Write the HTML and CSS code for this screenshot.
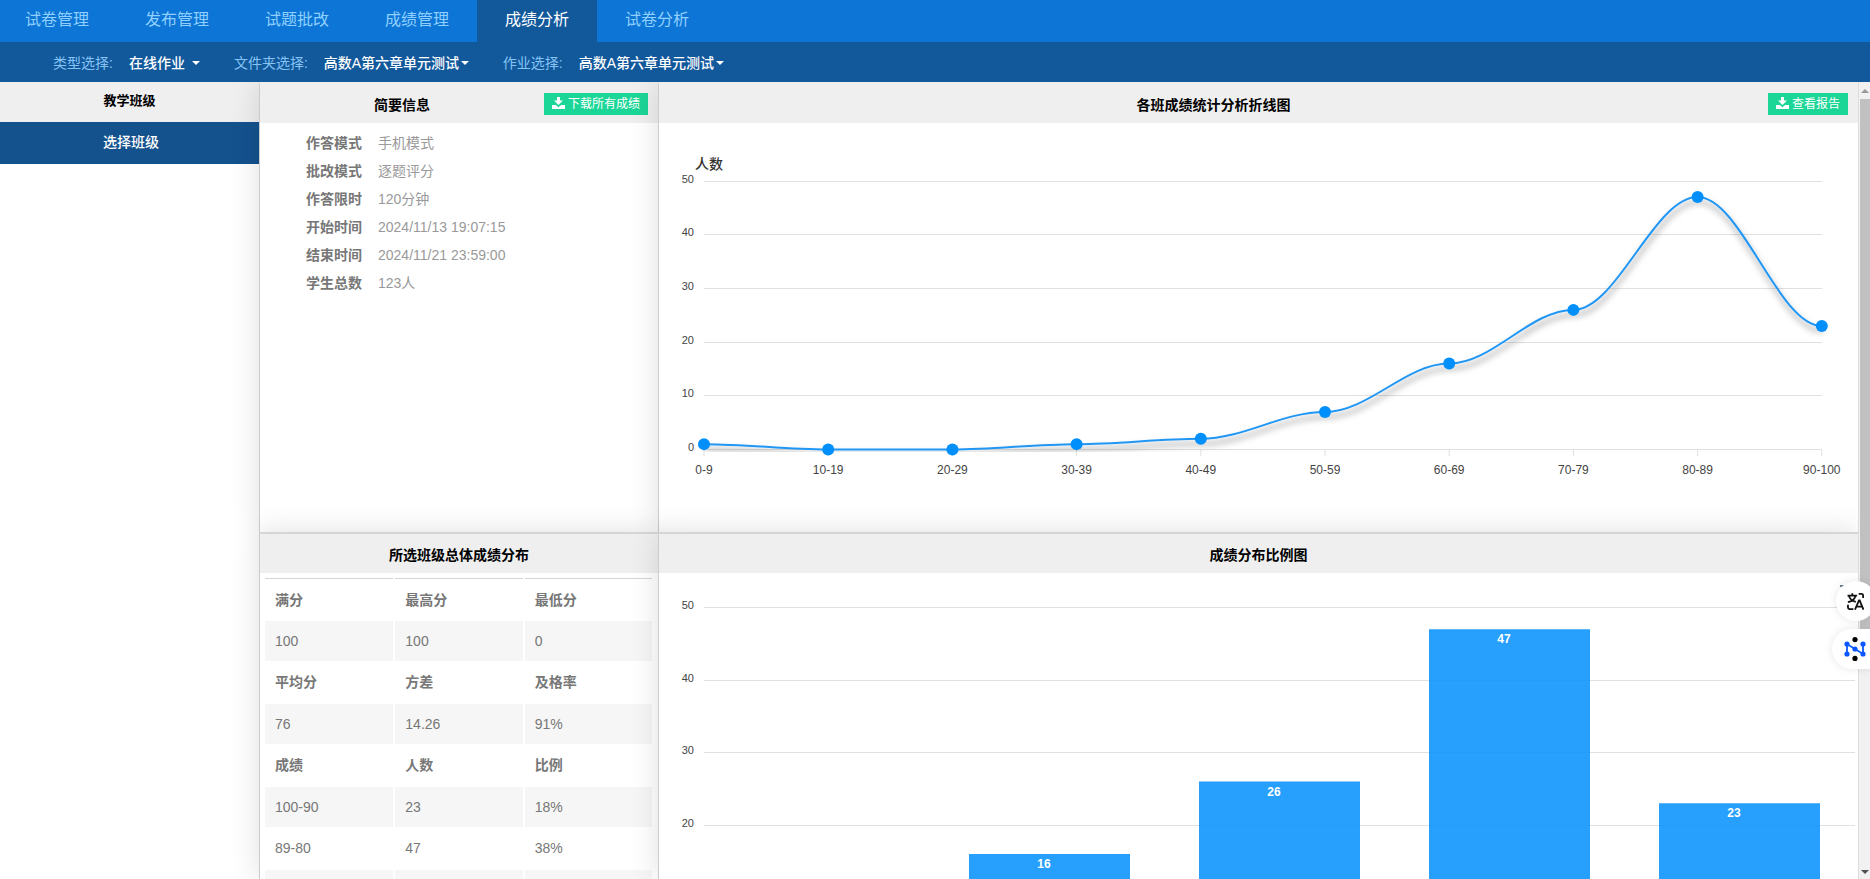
FILE: index.html
```html
<!DOCTYPE html>
<html lang="zh-CN">
<head>
<meta charset="utf-8">
<title>成绩分析</title>
<link rel="stylesheet" href="styles.css">
</head>
<body>
<div class="app">
  <header class="top">
    <nav class="tabs">
      <a href="#">试卷管理</a>
      <a href="#">发布管理</a>
      <a href="#">试题批改</a>
      <a href="#">成绩管理</a>
      <a href="#" class="active">成绩分析</a>
      <a href="#">试卷分析</a>
    </nav>
    <form class="filters">
      <div class="filter">
        <label for="type">类型选择:</label>
        <span class="pick spaced"><select id="type"><option>在线作业</option></select></span>
      </div>
      <div class="filter">
        <label for="folder">文件夹选择:</label>
        <span class="pick"><select id="folder"><option>高数A第六章单元测试</option></select></span>
      </div>
      <div class="filter">
        <label for="work">作业选择:</label>
        <span class="pick"><select id="work"><option>高数A第六章单元测试</option></select></span>
      </div>
    </form>
  </header>

  <div class="body">
    <aside class="sidebar">
      <h2>教学班级</h2>
      <button type="button" class="class-btn">选择班级</button>
    </aside>

    <main class="panels">
      <section class="panel first-row">
        <div class="panel-head">
          <h2>简要信息</h2>
          <button type="button" class="green"><svg width="13" height="12" viewBox="0 0 13 12"><path fill="#fff" d="M5 0h3v3.500h3L6.500 8 2 3.500h3zM0 8h3.800l2.700 2.300L9.200 8H13v4H0z"/></svg>下载所有成绩</button>
        </div>
        <dl class="info">
          <dt>作答模式</dt><dd>手机模式</dd>
          <dt>批改模式</dt><dd>逐题评分</dd>
          <dt>作答限时</dt><dd>120分钟</dd>
          <dt>开始时间</dt><dd>2024/11/13 19:07:15</dd>
          <dt>结束时间</dt><dd>2024/11/21 23:59:00</dd>
          <dt>学生总数</dt><dd>123人</dd>
        </dl>
      </section>

      <section class="panel first-row">
        <div class="panel-head">
          <h2>各班成绩统计分析折线图</h2>
          <button type="button" class="green"><svg width="13" height="12" viewBox="0 0 13 12"><path fill="#fff" d="M5 0h3v3.500h3L6.500 8 2 3.500h3zM0 8h3.800l2.700 2.300L9.200 8H13v4H0z"/></svg>查看报告</button>
        </div>
        <svg class="chart" id="line" viewBox="0 0 1199 400" role="img" aria-label="各班成绩统计分析折线图">
          <defs>
            <filter id="shade" filterUnits="userSpaceOnUse" x="0" y="0" width="1199" height="329">
              <feDropShadow dx="1" dy="5" stdDeviation="3" flood-color="#000" flood-opacity=".5"/>
            </filter>
          </defs>
          <text class="axis-title" x="36" y="46">人数</text>
        </svg>
      </section>

      <section class="panel">
        <div class="panel-head"><h2>所选班级总体成绩分布</h2></div>
        <div class="table-box">
        <table class="scores">
          <tbody>
          <tr><th>满分</th><th>最高分</th><th>最低分</th></tr>
          <tr><td>100</td><td>100</td><td>0</td></tr>
          <tr><th>平均分</th><th>方差</th><th>及格率</th></tr>
          <tr><td>76</td><td>14.26</td><td>91%</td></tr>
          <tr><th>成绩</th><th>人数</th><th>比例</th></tr>
          <tr><td>100-90</td><td>23</td><td>18%</td></tr>
          <tr><td>89-80</td><td>47</td><td>38%</td></tr>
          <tr><td></td><td></td><td></td></tr>
          </tbody>
        </table>
        </div>
      </section>

      <section class="panel">
        <div class="panel-head"><h2>成绩分布比例图</h2></div>
        <svg class="chart" id="bars" viewBox="0 0 1199 440" role="img" aria-label="成绩分布比例图">
          <path d="M1181 13h15M1181 17h15M1181 21h15" stroke="#6e8192" stroke-width="2"/>
        </svg>
      </section>
    </main>

    <div class="scrollbar" aria-hidden="true">
      <i class="up"></i><i class="thumb"></i><i class="down"></i>
    </div>
  </div>

  <button type="button" class="float translate" aria-label="翻译">
    <svg width="17" height="17" viewBox="0 0 16 16" fill="none" stroke="#111" stroke-width="1.700"><path d="M0.500 2.500h9M5 .3v2.200M1.800 2.800C3 6 5 7.500 8.300 8.300M8 2.800C7 6 4.500 8 .8 8.500"/><path d="M11 .9h2.500q1.700 0 1.700 1.700v2M.9 11v2.500q0 1.700 1.700 1.700H6"/><path d="M7.500 15.700 11.300 7h.6l3.600 8.700M9 12.800h5.200"/></svg>
  </button>
  <button type="button" class="float network" aria-label="助手">
    <svg width="22" height="24" viewBox="0 0 22 24"><path d="M3 17V7l16 10V7" fill="none" stroke="#0b57ff" stroke-width="1.800"/><g fill="#0b57ff"><circle cx="3" cy="7" r="2.600"/><circle cx="3" cy="17" r="2.600"/><circle cx="11" cy="12" r="2.600"/><circle cx="19" cy="7" r="2.600"/><circle cx="19" cy="17" r="2.600"/></g><g fill="#000"><circle cx="11" cy="2.600" r="2.600"/><circle cx="11" cy="21.400" r="2.600"/></g></svg>
  </button>
</div>
<script src="charts.js"></script>
</body>
</html>
```

FILE: charts.js
```js
const NS = 'http://www.w3.org/2000/svg';

function add(parent, tag, attrs, text) {
  const el = document.createElementNS(NS, tag);
  for (const k in attrs) el.setAttribute(k, attrs[k]);
  if (text !== undefined) el.textContent = text;
  parent.appendChild(el);
  return el;
}

function grid(svg, zero, step, right, lowest) {
  for (let v = lowest; v <= 50; v += 10) {
    const y = Math.floor(zero - v / 10 * step);
    add(svg, 'path', { d: `M45 ${y + 0.5}H${right}`, stroke: '#e0e0e0' });
    add(svg, 'text', { class: 'tick', x: 35, y: y + 2, 'text-anchor': 'end' }, v);
  }
}

// Line chart of head-count per score band
const line = document.getElementById('line');
const bands = ['0-9', '10-19', '20-29', '30-39', '40-49', '50-59', '60-69', '70-79', '80-89', '90-100'];
const counts = [1, 0, 0, 1, 2, 7, 16, 26, 47, 23];
const zero = 326.5, step = 53.7, gap = 124.2;
grid(line, zero, step, 1163, 0);
const pts = counts.map((c, i) => [45 + i * gap, zero - c / 10 * step]);
bands.forEach((b, i) => {
  add(line, 'path', { d: `M${pts[i][0]} 327v6`, stroke: '#e0e0e0' });
  add(line, 'text', { class: 'band', x: pts[i][0], y: 351, 'text-anchor': 'middle' }, b);
});
let d = `M${pts[0]}`;
for (let i = 1; i < pts.length; i++) {
  const [x0, y0] = pts[i - 1], [x1, y1] = pts[i], c = gap * 0.35;
  d += `C${x0 + c} ${y0} ${x1 - c} ${y1} ${x1} ${y1}`;
}
add(line, 'path', { d, fill: 'none', stroke: '#2196f3', 'stroke-width': 2, filter: 'url(#shade)' });
pts.forEach(([x, y]) => add(line, 'circle', { cx: x, cy: y, r: 6, fill: '#008ffb' }));

// Bar chart of score distribution
const bars = document.getElementById('bars');
grid(bars, 397, 72.5, 1196, 20);
[16, 26, 47, 23].forEach((v, i) => {
  const x = 310 + i * 230, y = 397 - v * 7.25;
  add(bars, 'rect', { x, y, width: 161, height: v * 7.25, fill: '#008ffb', 'fill-opacity': 0.85 });
  add(bars, 'text', { class: 'value', x: x + 75, y: y + 14, 'text-anchor': 'middle' }, v);
});
```

FILE: styles.css
```css
* { box-sizing: border-box; }
body {
  margin: 0;
  font: 14px/20px "Liberation Sans", "Noto Sans CJK SC", sans-serif;
  color: #777;
  background: #fff;
}
h2, dl, dd { margin: 0; }
button, select { font: inherit; border: 0; border-radius: 0; }

.app {
  position: relative;
  display: flex;
  flex-direction: column;
  height: 100vh;
  overflow: hidden;
}
.top { position: relative; z-index: 2; }
.tabs {
  display: flex;
  height: 42px;
  background: #0c75d5;
}
.tabs a {
  padding: 0 28px;
  font-size: 16px;
  line-height: 40px;
  color: #8fd0ff;
  text-decoration: none;
}
.tabs a:first-child { padding-left: 25px; }
.tabs .active { background: #12599c; color: #fff; }

.filters {
  display: flex;
  gap: 34px;
  height: 40px;
  padding: 2px 53px 0;
  align-items: center;
  background: #12599c;
}
.filter { display: flex; gap: 16px; align-items: center; }
.filter label { color: #86c3f5; }
.pick { display: flex; align-items: center; gap: 1px; }
.spaced { gap: 7px; }
.pick::after {
  content: "";
  border: 4px solid transparent;
  border-top-color: #fff;
  border-bottom: 0;
}
.pick select {
  appearance: none;
  padding: 0;
  background: none;
  color: #fff;
  font-weight: 500;
}

.body { display: flex; flex: 1; min-height: 0; }
.sidebar { flex: 0 0 259px; }
.sidebar h2 {
  font-size: 13px;
  line-height: 38px;
  height: 40px;
  text-align: center;
  color: #000;
  background: #efefef;
}
.class-btn {
  display: block;
  width: 100%;
  height: 42px;
  padding: 0 0 2px 3px;
  color: #fff;
  font-weight: 500;
  background: #14528e;
}

.panels {
  flex: 1;
  min-width: 0;
  display: grid;
  grid-template-columns: 399px minmax(0, 1fr);
  grid-template-rows: 450px minmax(0, 1fr);
}
.panel {
  position: relative;
  min-height: 0;
  background: #fff;
  border-left: 1px solid #ccc;
  border-top: 2px solid #d5d5d5;
  box-shadow: 0 0 28px rgba(0, 0, 0, .13);
}
.first-row { border-top-color: #efefef; }
.panel-head {
  display: flex;
  align-items: center;
  height: 39px;
  background: #efefef;
}
.first-row .panel-head { padding-right: 10px; }
.panel-head h2 {
  flex: 1;
  padding-top: 2px;
  font-size: 14px;
  line-height: 38px;
  font-weight: bold;
  text-align: center;
  color: #000;
}
.green {
  display: flex;
  align-items: center;
  gap: 3px;
  height: 22px;
  padding: 0 8px;
  font-size: 12px;
  line-height: 20px;
  color: #fff;
  background: #1bd696;
}
.green svg { margin-bottom: 2px; }

.info {
  display: grid;
  grid-template-columns: 56px 1fr;
  column-gap: 16px;
  padding: 6px 46px;
  line-height: 28px;
}
.info dt { font-weight: bold; }
.info dd { color: #999; }

.table-box { overflow: hidden; height: calc(100% - 39px); padding: 5px 4px 0 5px; }
.scores {
  width: 100%;
  table-layout: fixed;
  border-collapse: collapse;
  border-top: 1px solid #d5d5d5;
}
.scores th, .scores td {
  height: 43px;
  padding: 0 10px;
  text-align: left;
  border-right: 2px solid #fff;
}
.scores td { height: 40px; }
.scores tr:first-child th { height: 42px; }
.scores tr:nth-child(7) td { height: 43px; }
.scores tr:nth-child(even) td { background: #f6f6f6; }

.chart { display: block; width: 100%; height: auto; overflow: hidden; }
.axis-title { font-size: 14px; font-weight: 500; fill: #333; }
.tick { font-size: 11px; fill: #444; }
.band { font-size: 12px; fill: #444; }
.value { font-size: 12px; font-weight: bold; fill: #fff; }

.scrollbar {
  position: relative;
  z-index: 1;
  flex: 0 0 12px;
  display: flex;
  flex-direction: column;
  align-items: center;
  padding: 7px 0 5px 1px;
  background: #f1f1f1;
  border-left: 1px solid #ddd;
}
.scrollbar .up {
  border: 4px solid transparent;
  border-bottom-color: #999;
  border-top: 0;
}
.scrollbar .thumb {
  width: 10px;
  height: 530px;
  margin: 6px 0 auto;
  background: #c1c1c1;
}
.scrollbar .down {
  border: 4px solid transparent;
  border-top-color: #505050;
  border-bottom: 0;
}

.float {
  position: absolute;
  z-index: 3;
  display: flex;
  align-items: center;
  height: 40px;
  padding: 0;
  background: #fff;
  box-shadow: 0 0 8px rgba(0, 0, 0, .1);
}
.translate { right: -6px; top: 581px; width: 40px; border-radius: 20px; padding-left: 11px; }
.network { right: 0; top: 629px; width: 38px; border-radius: 20px 0 0 20px; padding-left: 12px; }
```
